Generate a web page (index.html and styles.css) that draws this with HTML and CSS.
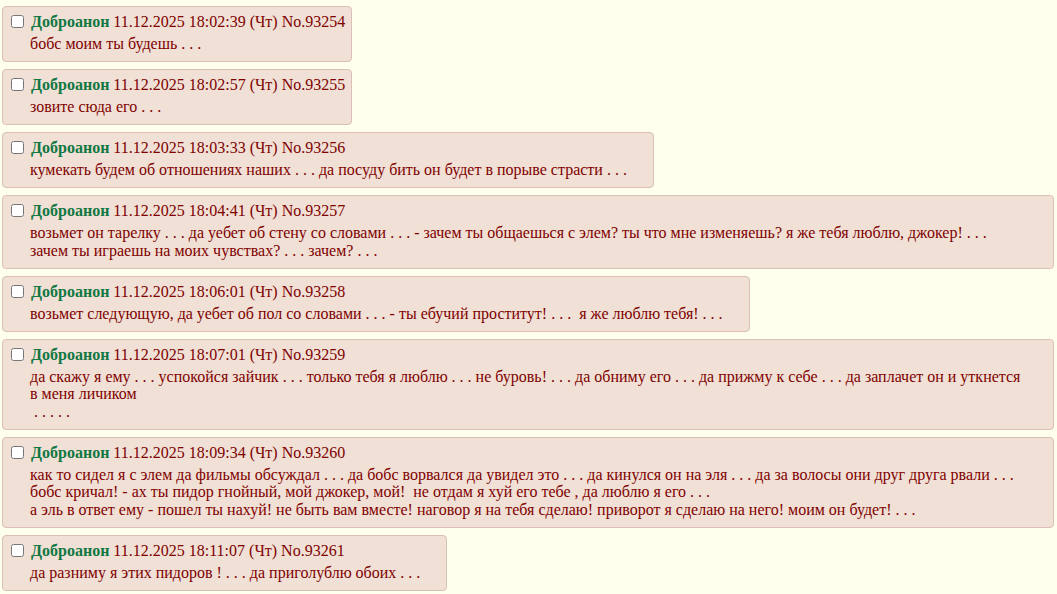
FILE: index.html
```html
<!DOCTYPE html>
<html lang="ru">
<head>
  <meta charset="UTF-8">
  <title>Тред</title>
  <link rel="stylesheet" href="styles.css">
</head>
<body>
  <div class="thread">
    <div class="post">
      <div class="post-head"><input type="checkbox"> <span class="name">Доброанон</span> 11.12.2025 18:02:39 (Чт) No.93254</div>
      <blockquote>бобс моим ты будешь . . .</blockquote>
    </div>
    <div class="post">
      <div class="post-head"><input type="checkbox"> <span class="name">Доброанон</span> 11.12.2025 18:02:57 (Чт) No.93255</div>
      <blockquote>зовите сюда его . . .</blockquote>
    </div>
    <div class="post">
      <div class="post-head"><input type="checkbox"> <span class="name">Доброанон</span> 11.12.2025 18:03:33 (Чт) No.93256</div>
      <blockquote>кумекать будем об отношениях наших . . . да посуду бить он будет в порыве страсти . . .</blockquote>
    </div>
    <div class="post">
      <div class="post-head"><input type="checkbox"> <span class="name">Доброанон</span> 11.12.2025 18:04:41 (Чт) No.93257</div>
      <blockquote>возьмет он тарелку . . . да уебет об стену со словами . . . - зачем ты общаешься с элем? ты что мне изменяешь? я же тебя люблю, джокер! . . . зачем ты играешь на моих чувствах? . . . зачем? . . .</blockquote>
    </div>
    <div class="post">
      <div class="post-head"><input type="checkbox"> <span class="name">Доброанон</span> 11.12.2025 18:06:01 (Чт) No.93258</div>
      <blockquote>возьмет следующую, да уебет об пол со словами . . . - ты ебучий проститут! . . . &nbsp;я же люблю тебя! . . .</blockquote>
    </div>
    <div class="post">
      <div class="post-head"><input type="checkbox"> <span class="name">Доброанон</span> 11.12.2025 18:07:01 (Чт) No.93259</div>
      <blockquote>да скажу я ему . . . успокойся зайчик . . . только тебя я люблю . . . не буровь! . . . да обниму его . . . да прижму к себе . . . да заплачет он и уткнется в меня личиком<br>&nbsp;. . . . .</blockquote>
    </div>
    <div class="post">
      <div class="post-head"><input type="checkbox"> <span class="name">Доброанон</span> 11.12.2025 18:09:34 (Чт) No.93260</div>
      <blockquote>как то сидел я с элем да фильмы обсуждал . . . да бобс ворвался да увидел это . . . да кинулся он на эля . . . да за волосы они друг друга рвали . . . бобс кричал! - ах ты пидор гнойный, мой джокер, мой! &nbsp;не отдам я хуй его тебе , да люблю я его . . .<br>а эль в ответ ему - пошел ты нахуй! не быть вам вместе! наговор я на тебя сделаю! приворот я сделаю на него! моим он будет! . . .</blockquote>
    </div>
    <div class="post">
      <div class="post-head"><input type="checkbox"> <span class="name">Доброанон</span> 11.12.2025 18:11:07 (Чт) No.93261</div>
      <blockquote>да разниму я этих пидоров ! . . . да приголублю обоих . . .</blockquote>
    </div>
  </div>
</body>
</html>
```

FILE: styles.css
```css
body { margin: 0; background-color: #ffffee; color: #800000; font-family: "Liberation Serif", "Times New Roman", serif; font-size: 16px; }
.thread { display: flex; flex-direction: column; align-items: flex-start; gap: 7px; padding: 6px 3px 0 2px; }
.post { background-color: #f0e0d6; border: 1px solid #d9bfb7; border-radius: 4px; padding: 5px 6px 4px 4px; max-width: 100%; box-sizing: border-box; }
.post-head { line-height: 20px; white-space: nowrap; }
.post-head input { width: 13px; height: 13px; margin: 0 3px 0 4px; vertical-align: -1px; }
.name { color: #117743; font-weight: bold; }
blockquote { margin: 3px 20px 4.5px 23px; line-height: 17.5px; }
```
